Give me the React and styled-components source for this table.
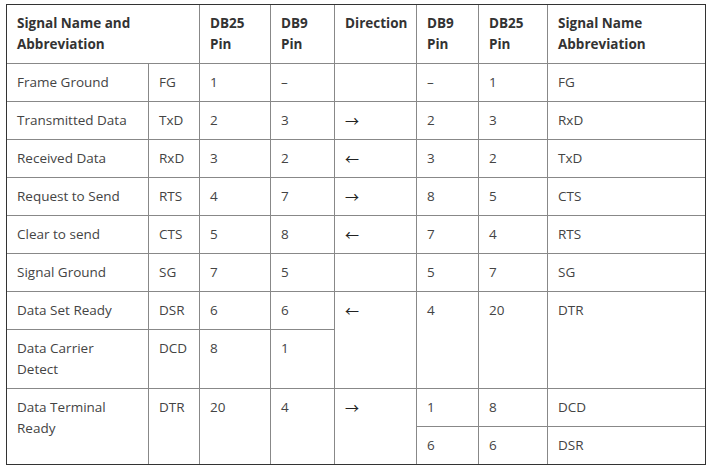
import React from "react";
import styled, { createGlobalStyle } from "styled-components";

const GlobalStyle = createGlobalStyle`
  body {
    margin: 0;
    background: #fff;
    font-family: "Open Sans", "Noto Sans", sans-serif;
  }
`;

const Page = styled.div`
  padding: 4px 0 0 6px;
`;

const Frame = styled.div`
  width: 698px;
  border: 1px solid #333;
  overflow: hidden;
`;

const Table = styled.table`
  border-collapse: collapse;
  table-layout: fixed;
  width: 700px;
  margin: -1px;
  font-size: 13.5px;
  line-height: 21px;
`;

const Head = styled.th`
  border: 1px solid #888;
  padding: 8px 10px;
  text-align: left;
  vertical-align: top;
  font-weight: 700;
  color: #333;
`;

const Cell = styled.td`
  border: 1px solid #888;
  padding: 8px 10px;
  vertical-align: top;
  color: #444;
`;

const Arrow = styled(Cell)`
  font-family: "Noto Sans CJK SC", sans-serif;
  font-size: 14px;
  color: #222;
`;

const widths = [142, 51, 71, 64, 82, 62, 69, 159];

const rows = [
  ["Frame Ground", "FG", "1", "–", "", "–", "1", "FG"],
  ["Transmitted Data", "TxD", "2", "3", "→", "2", "3", "RxD"],
  ["Received Data", "RxD", "3", "2", "←", "3", "2", "TxD"],
  ["Request to Send", "RTS", "4", "7", "→", "8", "5", "CTS"],
  ["Clear to send", "CTS", "5", "8", "←", "7", "4", "RTS"],
  ["Signal Ground", "SG", "7", "5", "", "5", "7", "SG"],
];

const App = () => {
  return (
    <Page>
      <GlobalStyle />
      <Frame>
        <Table>
          <colgroup>
            {widths.map((w, i) => (
              <col key={i} style={{ width: w }} />
            ))}
          </colgroup>
          <thead>
            <tr>
              <Head colSpan={2}>Signal Name and Abbreviation</Head>
              <Head>DB25 Pin</Head>
              <Head>DB9 Pin</Head>
              <Head>Direction</Head>
              <Head>DB9 Pin</Head>
              <Head>DB25 Pin</Head>
              <Head>Signal Name Abbreviation</Head>
            </tr>
          </thead>
          <tbody>
            {rows.map((r, i) => (
              <tr key={i}>
                {r.map((c, j) =>
                  j === 4 ? <Arrow key={j}>{c}</Arrow> : <Cell key={j}>{c}</Cell>
                )}
              </tr>
            ))}
            <tr>
              <Cell>Data Set Ready</Cell>
              <Cell>DSR</Cell>
              <Cell>6</Cell>
              <Cell>6</Cell>
              <Arrow rowSpan={2}>←</Arrow>
              <Cell rowSpan={2}>4</Cell>
              <Cell rowSpan={2}>20</Cell>
              <Cell rowSpan={2}>DTR</Cell>
            </tr>
            <tr>
              <Cell>Data Carrier Detect</Cell>
              <Cell>DCD</Cell>
              <Cell>8</Cell>
              <Cell>1</Cell>
            </tr>
            <tr>
              <Cell rowSpan={2}>Data Terminal Ready</Cell>
              <Cell rowSpan={2}>DTR</Cell>
              <Cell rowSpan={2}>20</Cell>
              <Cell rowSpan={2}>4</Cell>
              <Arrow rowSpan={2}>→</Arrow>
              <Cell>1</Cell>
              <Cell>8</Cell>
              <Cell>DCD</Cell>
            </tr>
            <tr>
              <Cell>6</Cell>
              <Cell>6</Cell>
              <Cell>DSR</Cell>
            </tr>
          </tbody>
        </Table>
      </Frame>
    </Page>
  );
};

export default App;
